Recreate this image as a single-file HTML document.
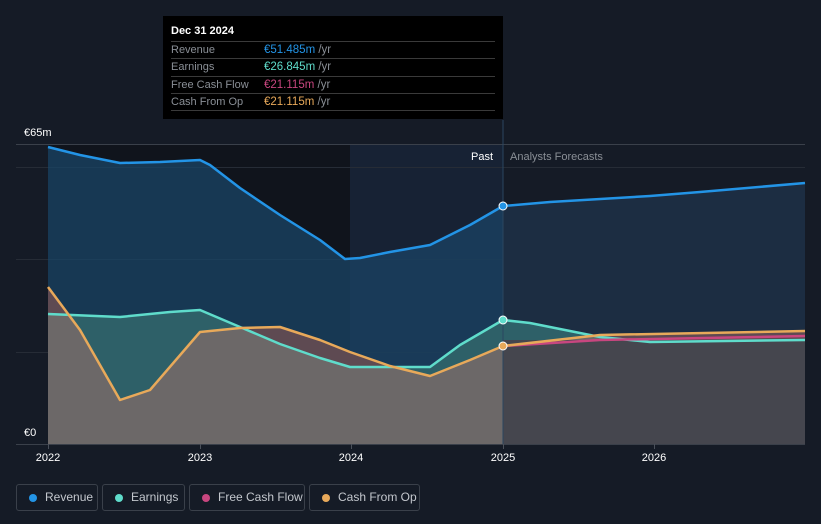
<!DOCTYPE html>
<html><head><meta charset="utf-8"><style>
body{margin:0;width:821px;height:524px;background:#151b26;font-family:"Liberation Sans",sans-serif;overflow:hidden;position:relative}
.tip{position:absolute;left:163px;top:16px;width:340px;height:103px;background:#000;}
.tip .h{position:absolute;left:8px;top:9px;color:#fff;font-size:11px;font-weight:bold}
.row{position:absolute;left:8px;width:324px;height:17px;border-top:1px solid #3a3a3a;font-size:11px;color:#8a8f96;line-height:17px}
.row span{position:absolute;left:93px;font-size:11.5px}
.row i{font-style:normal;color:#8a8f96}
.leg{position:absolute;top:484px;height:27px;border:1px solid #3a404a;border-radius:3px;color:#c3c7cd;font-size:12px;line-height:25px;box-sizing:border-box}
.leg b{position:absolute;left:12px;top:9px;width:8px;height:8px;border-radius:50%}
.leg span{position:absolute;left:28px}
</style></head><body>
<svg width="821" height="524" style="position:absolute;left:0;top:0">
<defs>
<clipPath id="ce"><polygon points="48,314 120,317 170,312 200,310 240,327 280,344 320,358 350,367 430,367 460,345 503,320 530,323 600,337 650,342 805,340 805,444 48,444"/></clipPath>
</defs>
<rect x="48" y="145" width="302" height="299" fill="#10141c"/>
<rect x="350" y="145" width="153" height="299" fill="#172234"/>
<g stroke="#262c36" stroke-width="1">
<line x1="16" y1="144.5" x2="805" y2="144.5" stroke="#3a404a"/>
<line x1="16" y1="167.5" x2="805" y2="167.5"/>
<line x1="16" y1="259.5" x2="805" y2="259.5"/>
<line x1="16" y1="352.5" x2="805" y2="352.5"/>
<line x1="16" y1="444.5" x2="805" y2="444.5" stroke="#3a404a"/>
</g>
<polygon fill="#1a4466" fill-opacity="0.75" points="48,147 80,155 120,163 160,162 200,160 210,165 240,188 280,215 320,240 345,259 360,258 390,252 430,245 470,225 503,206 503,444 48,444"/>
<polygon fill="#1b3a56" fill-opacity="0.45" points="350,258 390,252 430,245 470,225 503,206 503,444 350,444"/>
<polygon fill="#1c2d42" points="503,206 550,202 650,196 700,192 805,183 805,444 503,444"/>
<polygon fill="#2e6068" points="48,314 120,317 170,312 200,310 240,327 280,344 320,358 350,367 430,367 460,345 503,320 530,323 600,337 650,342 805,340 805,444 48,444"/>
<polygon fill="#5e4a52" points="48,287 80,330 120,400 150,390 200,332 240,328 280,327 320,340 350,352 390,366 430,376 470,360 503,346 600,335 805,331 805,444 48,444"/>
<polygon clip-path="url(#ce)" fill="#6c6868" points="48,287 80,330 120,400 150,390 200,332 240,328 280,327 320,340 350,352 390,366 430,376 470,360 503,346 600,335 805,331 805,444 48,444"/>
<rect x="503" y="340" width="302" height="104" fill="#45464e"/>
<line x1="503" y1="120" x2="503" y2="444" stroke="#2a4660"/>
<g fill="none" stroke-width="2.5" stroke-linejoin="round">
<polyline stroke="#2394e6" points="48,147 80,155 120,163 160,162 200,160 210,165 240,188 280,215 320,240 345,259 360,258 390,252 430,245 470,225 503,206 550,202 650,196 700,192 805,183"/>
<polyline stroke="#5fdccb" points="48,314 120,317 170,312 200,310 240,327 280,344 320,358 350,367 430,367 460,345 503,320 530,323 600,337 650,342 805,340"/>
<polyline stroke="#c8467f" points="503,346 600,340 805,336"/>
<polyline stroke="#e8a95a" points="48,287 80,330 120,400 150,390 200,332 240,328 280,327 320,340 350,352 390,366 430,376 470,360 503,346 600,335 805,331"/>
</g>
<circle cx="503" cy="206" r="4" fill="#2394e6" stroke="#fff" stroke-width="1"/>
<circle cx="503" cy="320" r="4" fill="#5fdccb" stroke="#fff" stroke-width="1"/>
<circle cx="503" cy="346" r="4" fill="#e8a95a" stroke="#fff" stroke-width="1"/>
<g stroke="#4a505a"><line x1="48.5" y1="444" x2="48.5" y2="449"/><line x1="200.5" y1="444" x2="200.5" y2="449"/><line x1="351.5" y1="444" x2="351.5" y2="449"/><line x1="503.5" y1="444" x2="503.5" y2="449"/><line x1="654.5" y1="444" x2="654.5" y2="449"/></g>
<g font-size="11" fill="#fff" text-anchor="middle">
<text x="48" y="461">2022</text><text x="200" y="461">2023</text><text x="351" y="461">2024</text><text x="503" y="461">2025</text><text x="654" y="461">2026</text>
</g>
<text x="24" y="136" font-size="11" fill="#fff">€65m</text>
<text x="24" y="436" font-size="11" fill="#fff">€0</text>
<text x="493" y="160" font-size="11" fill="#fff" text-anchor="end">Past</text>
<text x="510" y="160" font-size="11" fill="#8a8f96">Analysts Forecasts</text>
</svg>
<div class="tip"><div class="h">Dec 31 2024</div>
<div class="row" style="top:25px">Revenue<span style="color:#2394e6">€51.485m <i>/yr</i></span></div>
<div class="row" style="top:42px">Earnings<span style="color:#5fdccb">€26.845m <i>/yr</i></span></div>
<div class="row" style="top:60px">Free Cash Flow<span style="color:#c8467f">€21.115m <i>/yr</i></span></div>
<div class="row" style="top:77px">Cash From Op<span style="color:#e8a95a">€21.115m <i>/yr</i></span></div>
<div class="row" style="top:94px;height:0"></div>
</div>
<div class="leg" style="left:16px;width:82px"><b style="background:#2394e6"></b><span>Revenue</span></div>
<div class="leg" style="left:102px;width:83px"><b style="background:#5fdccb"></b><span>Earnings</span></div>
<div class="leg" style="left:189px;width:116px"><b style="background:#c8467f"></b><span>Free Cash Flow</span></div>
<div class="leg" style="left:309px;width:111px"><b style="background:#e8a95a"></b><span>Cash From Op</span></div>
</body></html>
